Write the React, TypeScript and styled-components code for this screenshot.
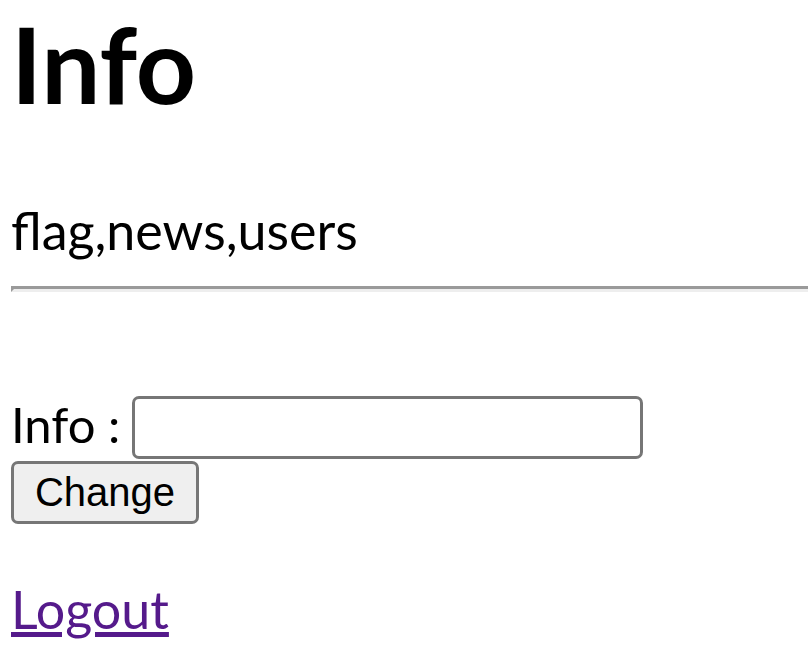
import React from "react";
import styled, { createGlobalStyle } from "styled-components";

const Global = createGlobalStyle`
  html, body { margin: 0; padding: 0; background: #ffffff; overflow: hidden; }
  body { font-family: Lato, "Noto Sans", sans-serif; color: #000; }
`;

const Page = styled.div`
  padding-left: 11px;
  width: 808px;
  box-sizing: border-box;
`;

const Title = styled.h1`
  margin: 0;
  font-size: 105px;
  line-height: 1.2;
  font-weight: 700;
`;

const Tables = styled.p`
  margin: 73px 0 0;
  font-size: 52px;
  line-height: 1.2;
`;

const Rule = styled.hr`
  margin: 25px 0 0;
  height: 0;
  border-style: solid;
  border-width: 3px 0 3px 3px;
  border-color: #9a9a9a transparent #eeeeee #9a9a9a;
`;

const Form = styled.form`
  margin: 104px 0 0;
`;

const FieldRow = styled.div`
  display: flex;
  align-items: flex-end;
  gap: 12px;
`;

const Label = styled.label`
  font-size: 49px;
  line-height: 1;
  padding-bottom: 10px;
`;

const Input = styled.input`
  box-sizing: border-box;
  width: 511px;
  height: 63px;
  border: 3px solid #767676;
  border-radius: 7px;
  background: #fff;
  font: 40px "Liberation Sans", Arial, sans-serif;
`;

const Button = styled.button`
  display: block;
  box-sizing: border-box;
  margin-top: 2px;
  width: 188px;
  height: 63px;
  border: 3px solid #767676;
  border-radius: 7px;
  background: #efefef;
  font: 40px "Liberation Sans", Arial, sans-serif;
  color: #000;
  padding: 0;
`;

const Logout = styled.a`
  display: block;
  margin-top: 54px;
  font-size: 52px;
  line-height: 1.2;
  color: #551a8b;
  text-decoration: underline;
`;

export default function App() {
  return (
    <Page>
      <Global />
      <Title>Info</Title>
      <Tables>flag,news,users</Tables>
      <Rule />
      <Form onSubmit={(e) => e.preventDefault()}>
        <FieldRow>
          <Label>Info :</Label>
          <Input type="text" />
        </FieldRow>
        <Button type="submit">Change</Button>
      </Form>
      <Logout href="#">Logout</Logout>
    </Page>
  );
}
